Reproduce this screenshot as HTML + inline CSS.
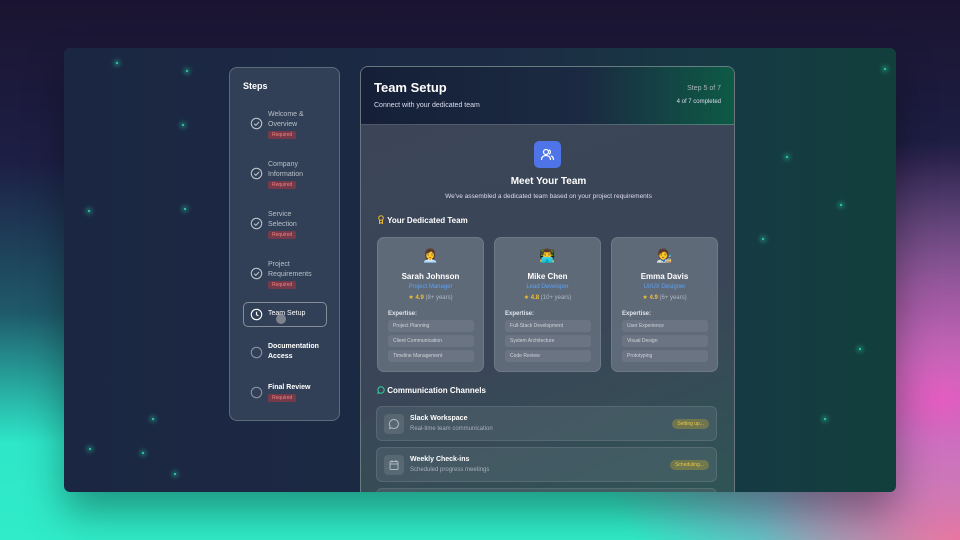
<!DOCTYPE html>
<html><head><meta charset="utf-8"><style>
*{box-sizing:border-box;margin:0;padding:0}
body{width:960px;height:540px;overflow:hidden;font-family:"Liberation Sans",sans-serif;position:relative;
background:radial-gradient(ellipse 360px 260px at 940px 400px,#e45cc0 0%,rgba(228,92,192,0.6) 45%,rgba(228,92,192,0) 100%),
radial-gradient(ellipse 200px 120px at 960px 540px,#f09080,rgba(240,144,128,0) 100%),
linear-gradient(180deg,#1b1431 0%,#1d1f45 30%,#1f5a6a 58%,#2ee6c8 82%,#30ecc8 100%);}
.win{position:absolute;left:64px;top:48px;width:832px;height:444px;border-radius:6px;overflow:hidden;
background:linear-gradient(90deg,#1b2742 0%,#1d2a44 50%,#163a44 80%,#123f3c 100%);box-shadow:0 20px 40px rgba(0,0,0,.35)}
.star{position:absolute;width:2px;height:2px;border-radius:50%;background:#2ee0b0;box-shadow:0 0 5px 2px rgba(46,224,176,.45)}
.side{position:absolute;left:165px;top:19px;width:111px;height:354px;border-radius:8px;background:rgba(70,84,104,.55);border:1px solid rgba(255,255,255,.22)}
.side h3{position:absolute;left:13px;top:13px;color:#fff;font-size:9px;font-weight:bold}
.st{position:absolute;left:20px;width:90px}
.st svg{position:absolute;left:0}
.st .t{position:absolute;left:18px;font-size:7px;line-height:10px;color:#b8c0c8}
.st .r{position:absolute;left:18px;font-size:5px;background:rgba(200,50,60,.45);color:#f08080;padding:1px 4px;border-radius:2px}
.main{position:absolute;left:296px;top:18px;width:375px;height:440px;border-radius:8px;overflow:hidden;background:linear-gradient(160deg,#3b4557 0%,#3a4657 60%,#2f5555 100%);border:1px solid rgba(255,255,255,.25)}
.hdr{height:58px;background:linear-gradient(90deg,#152038 0%,#1b2a42 60%,#0d5a45 100%);border-bottom:1px solid rgba(255,255,255,.25);position:relative}
.card{position:absolute;top:170px;width:107px;height:135px;border-radius:7px;background:#5f6a79;border:1px solid rgba(255,255,255,.1);text-align:center}
.card .e{font-size:13px;margin-top:10px;height:18px}
.card .n{color:#fff;font-size:8px;font-weight:bold;margin-top:6px}
.card .ro{color:#5ea0f0;font-size:6px;margin-top:3px}
.card .rt{font-size:6px;color:#b0b8c0;margin-top:4px}
.card .rt b{color:#f0c030}
.card .x{text-align:left;color:#e0e4ea;font-size:6px;font-weight:bold;margin:10px 0 0 10px}
.card .p{text-align:left;margin:3px 0 0 10px;width:86px;height:12px;background:rgba(255,255,255,.07);border-radius:3px;font-size:5px;color:#d0d4da;line-height:12px;padding-left:5px}
.ch{position:absolute;left:15px;width:341px;height:35px;border-radius:6px;background:rgba(120,135,145,.22);border:1px solid rgba(255,255,255,.1)}
.ch .bx{position:absolute;left:7px;top:7px;width:20px;height:20px;border-radius:4px;background:rgba(255,255,255,.1)}
.ch .a{position:absolute;left:33px;top:8px;color:#fff;font-size:7px;font-weight:bold}
.ch .b{position:absolute;left:33px;top:19px;color:#a8b0b8;font-size:6px}
.ch .bd{position:absolute;right:7px;top:12px;font-size:5px;color:#e8c840;background:rgba(200,170,40,.35);padding:2px 5px;border-radius:5px}
</style></head><body>
<div class="win">
<div class="star" style="left:52px;top:14px"></div><div class="star" style="left:118px;top:76px"></div>
<div class="star" style="left:122px;top:22px"></div><div class="star" style="left:24px;top:162px"></div>
<div class="star" style="left:88px;top:370px"></div><div class="star" style="left:25px;top:400px"></div><div class="star" style="left:78px;top:404px"></div>
<div class="star" style="left:110px;top:425px"></div><div class="star" style="left:120px;top:160px"></div>
<div class="star" style="left:722px;top:108px"></div><div class="star" style="left:776px;top:156px"></div>
<div class="star" style="left:698px;top:190px"></div><div class="star" style="left:820px;top:20px"></div>
<div class="star" style="left:795px;top:300px"></div><div class="star" style="left:760px;top:370px"></div>
<div class="side"><h3>Steps</h3>
<svg width="0" height="0" style="position:absolute"><defs><symbol id="ck" viewBox="0 0 14 14"><circle cx="7" cy="7" r="5.6" fill="none" stroke="#b8c0c8" stroke-width="1.2"/><path d="M4.5 7.2l1.8 1.8 3.4-3.6" fill="none" stroke="#b8c0c8" stroke-width="1.2"/></symbol></defs></svg>
<div class="st" style="top:42px"><svg width="13" height="13" style="top:7px"><use href="#ck"/></svg><div class="t" style="top:0">Welcome &amp;<br>Overview</div><div class="r" style="top:21px">Required</div></div>
<div class="st" style="top:92px"><svg width="13" height="13" style="top:7px"><use href="#ck"/></svg><div class="t" style="top:0">Company<br>Information</div><div class="r" style="top:21px">Required</div></div>
<div class="st" style="top:142px"><svg width="13" height="13" style="top:7px"><use href="#ck"/></svg><div class="t" style="top:0">Service<br>Selection</div><div class="r" style="top:21px">Required</div></div>
<div class="st" style="top:192px"><svg width="13" height="13" style="top:7px"><use href="#ck"/></svg><div class="t" style="top:0">Project<br>Requirements</div><div class="r" style="top:21px">Required</div></div>
<div style="position:absolute;left:13px;top:234px;width:84px;height:25px;border:1px solid rgba(255,255,255,.4);border-radius:5px"></div>
<div class="st" style="top:240px"><svg width="13" height="13" viewBox="0 0 14 14" style="top:0"><circle cx="7" cy="7" r="5.6" fill="none" stroke="#fff" stroke-width="1.2"/><path d="M7 4v3.2l2 1.3" fill="none" stroke="#fff" stroke-width="1.2"/></svg><div class="t" style="top:1px;color:#fff">Team Setup</div></div>
<div style="position:absolute;left:46px;top:246px;width:10px;height:10px;border-radius:50%;background:rgba(200,200,200,.5)"></div>
<div class="st" style="top:274px"><svg width="13" height="13" viewBox="0 0 14 14" style="top:4px"><circle cx="7" cy="7" r="5.6" fill="none" stroke="#8890a0" stroke-width="1.2"/></svg><div class="t" style="top:0;color:#fff;font-weight:bold">Documentation<br>Access</div></div>
<div class="st" style="top:315px"><svg width="13" height="13" viewBox="0 0 14 14" style="top:3px"><circle cx="7" cy="7" r="5.6" fill="none" stroke="#8890a0" stroke-width="1.2"/></svg><div class="t" style="top:0;color:#fff;font-weight:bold">Final Review</div><div class="r" style="top:11px">Required</div></div>
</div>
<div class="main">
<div class="hdr">
<div style="position:absolute;left:13px;top:13px;color:#fff;font-size:13px;font-weight:bold">Team Setup</div>
<div style="position:absolute;left:13px;top:35px;color:#dde;font-size:7px">Connect with your dedicated team</div>
<div style="position:absolute;right:13px;top:18px;color:#a8b4bc;font-size:7px">Step 5 of 7</div>
<div style="position:absolute;right:13px;top:32px;color:#dde;font-size:6px">4 of 7 completed</div>
</div>
<div style="position:absolute;left:173px;top:74px;width:27px;height:27px;border-radius:5px;background:#4f74e8">
<svg width="27" height="27" viewBox="0 0 27 27" fill="none" stroke="#fff" stroke-width="1.2"><circle cx="12" cy="11" r="2.5"/><path d="M7.5 19c0-3 2-4.5 4.5-4.5s4.5 1.5 4.5 4.5M15 8.8a2.5 2.5 0 010 4.5M17 14.8c1.5.5 2.5 2 2.5 4.2"/></svg></div>
<div style="position:absolute;left:0;width:375px;top:109px;text-align:center;color:#fff;font-size:10px;font-weight:bold">Meet Your Team</div>
<div style="position:absolute;left:0;width:375px;top:126px;text-align:center;color:#dde;font-size:6.5px">We've assembled a dedicated team based on your project requirements</div>
<div style="position:absolute;left:16px;top:148px;color:#fff;font-size:8px;font-weight:bold"><svg width="8" height="9" viewBox="0 0 8 9" style="vertical-align:-1px"><circle cx="4" cy="3" r="2.3" fill="none" stroke="#e8b830" stroke-width="1"/><path d="M2.5 5v3.5l1.5-1 1.5 1V5" fill="none" stroke="#e8b830" stroke-width="1"/></svg> Your Dedicated Team</div>
<div class="card" style="left:16px"><div class="e">👩‍💼</div><div class="n">Sarah Johnson</div><div class="ro">Project Manager</div><div class="rt"><span style="color:#f0c030">★</span> <b>4.9</b> (8+ years)</div><div class="x">Expertise:</div><div class="p">Project Planning</div><div class="p">Client Communication</div><div class="p">Timeline Management</div></div>
<div class="card" style="left:133px"><div class="e">👨‍💻</div><div class="n">Mike Chen</div><div class="ro">Lead Developer</div><div class="rt"><span style="color:#f0c030">★</span> <b>4.8</b> (10+ years)</div><div class="x">Expertise:</div><div class="p">Full-Stack Development</div><div class="p">System Architecture</div><div class="p">Code Review</div></div>
<div class="card" style="left:250px"><div class="e">🧑‍🎨</div><div class="n">Emma Davis</div><div class="ro">UI/UX Designer</div><div class="rt"><span style="color:#f0c030">★</span> <b>4.9</b> (6+ years)</div><div class="x">Expertise:</div><div class="p">User Experience</div><div class="p">Visual Design</div><div class="p">Prototyping</div></div>
<div style="position:absolute;left:16px;top:319px;color:#fff;font-size:8px;font-weight:bold"><svg width="8" height="8" viewBox="0 0 8 8" style="vertical-align:-1px"><path d="M4 .8a3.2 3.2 0 11-1.6 6L1 7.3l.5-1.5A3.2 3.2 0 014 .8z" fill="none" stroke="#30d0a0" stroke-width="1"/></svg> Communication Channels</div>
<div class="ch" style="top:339px"><div class="bx"><svg width="20" height="20" viewBox="0 0 20 20"><path d="M10 5.5a4.5 4.5 0 11-2.3 8.4L5.5 14.5l.6-2.2A4.5 4.5 0 0110 5.5z" fill="none" stroke="#b0b8c0" stroke-width="1"/></svg></div><div class="a">Slack Workspace</div><div class="b">Real-time team communication</div><div class="bd">Setting up...</div></div>
<div class="ch" style="top:380px"><div class="bx"><svg width="20" height="20" viewBox="0 0 20 20" fill="none" stroke="#b0b8c0" stroke-width="1"><rect x="6" y="6.5" width="8" height="8" rx="1"/><path d="M6 9h8M8 5v2.5M12 5v2.5"/></svg></div><div class="a">Weekly Check-ins</div><div class="b">Scheduled progress meetings</div><div class="bd">Scheduling...</div></div>
<div class="ch" style="top:421px"></div>
</div>
</div>
</body></html>
